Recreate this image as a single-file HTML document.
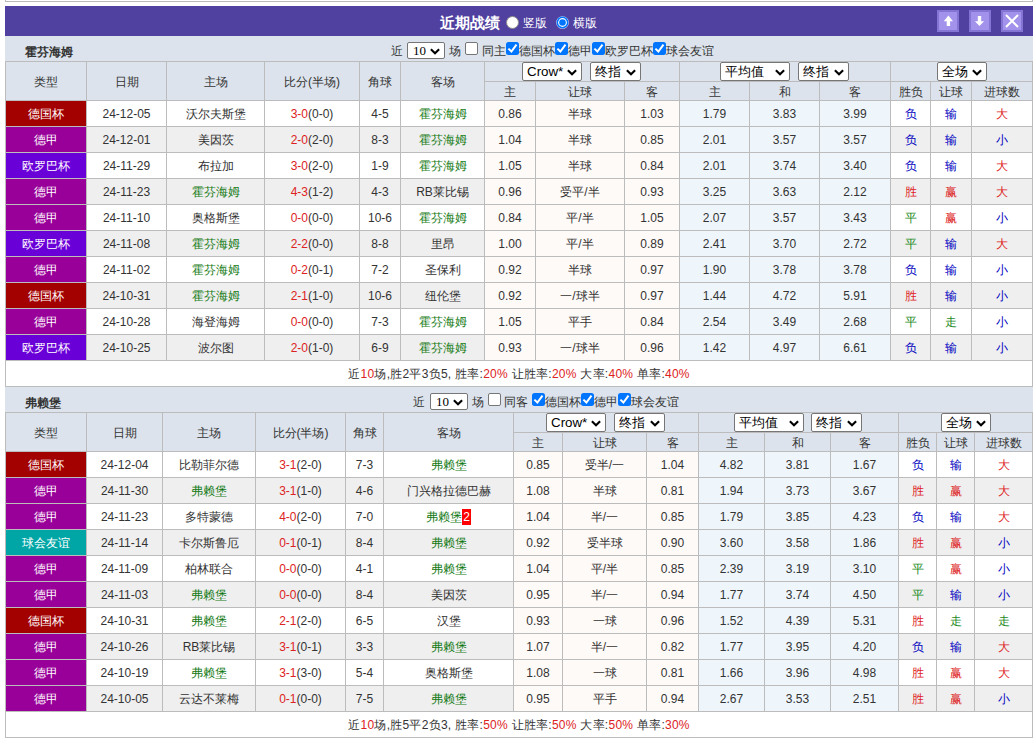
<!DOCTYPE html><html><head><meta charset="utf-8"><style>
*{box-sizing:border-box}
html,body{margin:0;padding:0;background:#fff}
body{width:1034px;height:740px;position:relative;overflow:hidden;font-family:"Liberation Sans",sans-serif;font-size:12px;color:#333}
.topbox{position:absolute;left:5px;top:-10px;width:1028px;height:12px;border:1px solid #b9b9b9;background:#fff}
.bar{position:absolute;left:5px;top:6px;width:1028px;height:30px;background:#5040a0}
.ttl{position:absolute;left:435px;top:9px;font-size:15px;font-weight:bold;color:#fff;line-height:16px}
.rad{position:absolute;top:10px;width:13px;height:13px;border-radius:50%;background:#fff;border:1px solid #8c8c8c}
.rad.on{border:none;background:none}
.rt{position:absolute;top:10px;color:#fff;font-size:12px;line-height:14px}
.btn{position:absolute;top:4px;width:22px;height:22px;background:#a392ec;border:2px solid #8474d4}
.sect{position:absolute;left:5px;width:1028px;height:25px;background:#dce3ec}
.sname{position:absolute;left:20px;top:9px;font-weight:bold;font-size:12px;line-height:14px;color:#333}
.ft{position:absolute;font-size:12px;line-height:20px;color:#333;white-space:nowrap}
.cb{position:absolute;width:13px;height:13px;border:1px solid #767676;border-radius:2px;background:#fff}
.cb.on{background:#0075ff;border:none;border-radius:2.5px}
.cb svg{position:absolute;left:0;top:0}
.sel{position:absolute;border:1px solid #767676;border-radius:2px;background:#fff;font-size:13.33px;color:#000;white-space:nowrap}
.sel .st{position:absolute;left:4px;top:0}
.sel.ser .st{font-family:"Liberation Serif",serif;font-size:13px;left:5px}
.sel .chev{position:absolute}
table.t{position:absolute;left:5px;border-collapse:separate;border-spacing:0;table-layout:fixed;width:1028px;border-left:1px solid #bcbcbc;border-top:1px solid #bcbcbc}
.t th,.t td{border-right:1px solid #bcbcbc;border-bottom:1px solid #bcbcbc;padding:0;text-align:center;font-weight:normal;white-space:nowrap;overflow:hidden;line-height:20px}
.t th{background:#dce3ec;color:#333}
.t tr.h1 th{height:20px;padding-top:2px}
.t tr.h1 th.sc{padding:0}
.t tr.h2 th{height:19px;padding-top:2px;line-height:16px}
.t tr.d td{height:26px;background:#fff;padding-top:0px}
.t tr.d.alt td{background:#efefef}
.t tr.d td.cw{background:#fefaf7}
.t tr.d td.av{background:#eff6fb}
.t td.ty{color:#fff}
.t tr.sum td{height:26px;background:#fff;letter-spacing:0.26px}
.red{color:#dd2222}
.gr{color:#137a13}
.r{color:#dd2222}
.b{color:#0000c0}
.g{color:#1a8a1a}
.red2{background:#f00;color:#fff;padding:1px 1px 1px 1px}
</style></head><body>
<div class="topbox"></div>
<div class="bar">
<div class="ttl">近期战绩</div>
<div class="rad" style="left:501px"></div><div class="rt" style="left:518px">竖版</div>
<div class="rad on" style="left:551px"><svg width="13" height="13" viewBox="0 0 13 13" style="position:absolute;left:0;top:0"><circle cx="6.5" cy="6.5" r="6.3" fill="#e6eeff"/><circle cx="6.5" cy="6.5" r="5.9" fill="#0075ff"/><circle cx="6.5" cy="6.5" r="4.4" fill="#fff"/><circle cx="6.5" cy="6.5" r="3.3" fill="#0075ff"/></svg></div><div class="rt" style="left:568px">横版</div>
<div class="btn" style="left:932px"><svg width="18" height="18" viewBox="0 0 18 18" style="position:absolute;left:0;top:0"><path d="M4.8 9.2 L9.4 3.6 L14 9.2 L11.1 9.2 L11.1 14.1 L7.7 14.1 L7.7 9.2 Z" fill="#fff"/></svg></div>
<div class="btn" style="left:964px"><svg width="18" height="18" viewBox="0 0 18 18" style="position:absolute;left:0;top:0"><path d="M3.9 9.2 L6.8 9.2 L6.8 3.9 L10.2 3.9 L10.2 9.2 L13.1 9.2 L8.5 14.1 Z" fill="#fff"/></svg></div>
<div class="btn" style="left:996px"><svg width="18" height="18" viewBox="0 0 18 18" style="position:absolute;left:0;top:0"><path d="M3 3 L15 15 M15 3 L3 15" stroke="#fff" stroke-width="2"/></svg></div>
</div>
<div class="sect" style="top:36px"><div class="sname">霍芬海姆</div></div>
<table class="t" style="top:61px">
<colgroup><col style="width:81px"><col style="width:80px"><col style="width:98px"><col style="width:95px"><col style="width:41px"><col style="width:84px"><col style="width:51px"><col style="width:89px"><col style="width:55px"><col style="width:70px"><col style="width:70px"><col style="width:71px"><col style="width:40px"><col style="width:41px"><col style="width:61px"></colgroup>
<tr class="h1">
<th rowspan="2">类型</th>
<th rowspan="2">日期</th>
<th rowspan="2">主场</th>
<th rowspan="2">比分(半场)</th>
<th rowspan="2">角球</th>
<th rowspan="2">客场</th>
<th colspan="3" class="sc"></th>
<th colspan="3" class="sc"></th>
<th colspan="3" class="sc"></th>
</tr>
<tr class="h2"><th>主</th><th>让球</th><th>客</th><th>主</th><th>和</th><th>客</th><th>胜负</th><th>让球</th><th>进球数</th></tr>
<tr class="d ">
<td class="ty" style="background:#a30000">德国杯</td>
<td>24-12-05</td>
<td>沃尔夫斯堡</td>
<td><span class="red">3-0</span>(0-0)</td>
<td>4-5</td>
<td><span class="gr">霍芬海姆</span></td>
<td class="cw">0.86</td>
<td class="cw">半球</td>
<td class="cw">1.03</td>
<td class="av">1.79</td>
<td class="av">3.83</td>
<td class="av">3.99</td>
<td class="b">负</td>
<td class="b">输</td>
<td class="r">大</td>
</tr>
<tr class="d alt">
<td class="ty" style="background:#990099">德甲</td>
<td>24-12-01</td>
<td>美因茨</td>
<td><span class="red">2-0</span>(2-0)</td>
<td>8-3</td>
<td><span class="gr">霍芬海姆</span></td>
<td class="cw">1.04</td>
<td class="cw">半球</td>
<td class="cw">0.85</td>
<td class="av">2.01</td>
<td class="av">3.57</td>
<td class="av">3.57</td>
<td class="b">负</td>
<td class="b">输</td>
<td class="b">小</td>
</tr>
<tr class="d ">
<td class="ty" style="background:#6a00d8">欧罗巴杯</td>
<td>24-11-29</td>
<td>布拉加</td>
<td><span class="red">3-0</span>(2-0)</td>
<td>1-9</td>
<td><span class="gr">霍芬海姆</span></td>
<td class="cw">1.05</td>
<td class="cw">半球</td>
<td class="cw">0.84</td>
<td class="av">2.01</td>
<td class="av">3.74</td>
<td class="av">3.40</td>
<td class="b">负</td>
<td class="b">输</td>
<td class="r">大</td>
</tr>
<tr class="d alt">
<td class="ty" style="background:#990099">德甲</td>
<td>24-11-23</td>
<td><span class="gr">霍芬海姆</span></td>
<td><span class="red">4-3</span>(1-2)</td>
<td>4-3</td>
<td>RB莱比锡</td>
<td class="cw">0.96</td>
<td class="cw">受平/半</td>
<td class="cw">0.93</td>
<td class="av">3.25</td>
<td class="av">3.63</td>
<td class="av">2.12</td>
<td class="r">胜</td>
<td class="r">赢</td>
<td class="r">大</td>
</tr>
<tr class="d ">
<td class="ty" style="background:#990099">德甲</td>
<td>24-11-10</td>
<td>奥格斯堡</td>
<td><span class="red">0-0</span>(0-0)</td>
<td>10-6</td>
<td><span class="gr">霍芬海姆</span></td>
<td class="cw">0.84</td>
<td class="cw">平/半</td>
<td class="cw">1.05</td>
<td class="av">2.07</td>
<td class="av">3.57</td>
<td class="av">3.43</td>
<td class="g">平</td>
<td class="r">赢</td>
<td class="b">小</td>
</tr>
<tr class="d alt">
<td class="ty" style="background:#6a00d8">欧罗巴杯</td>
<td>24-11-08</td>
<td><span class="gr">霍芬海姆</span></td>
<td><span class="red">2-2</span>(0-0)</td>
<td>8-8</td>
<td>里昂</td>
<td class="cw">1.00</td>
<td class="cw">平/半</td>
<td class="cw">0.89</td>
<td class="av">2.41</td>
<td class="av">3.70</td>
<td class="av">2.72</td>
<td class="g">平</td>
<td class="b">输</td>
<td class="r">大</td>
</tr>
<tr class="d ">
<td class="ty" style="background:#990099">德甲</td>
<td>24-11-02</td>
<td><span class="gr">霍芬海姆</span></td>
<td><span class="red">0-2</span>(0-1)</td>
<td>7-2</td>
<td>圣保利</td>
<td class="cw">0.92</td>
<td class="cw">半球</td>
<td class="cw">0.97</td>
<td class="av">1.90</td>
<td class="av">3.78</td>
<td class="av">3.78</td>
<td class="b">负</td>
<td class="b">输</td>
<td class="b">小</td>
</tr>
<tr class="d alt">
<td class="ty" style="background:#a30000">德国杯</td>
<td>24-10-31</td>
<td><span class="gr">霍芬海姆</span></td>
<td><span class="red">2-1</span>(1-0)</td>
<td>10-6</td>
<td>纽伦堡</td>
<td class="cw">0.92</td>
<td class="cw">一/球半</td>
<td class="cw">0.97</td>
<td class="av">1.44</td>
<td class="av">4.72</td>
<td class="av">5.91</td>
<td class="r">胜</td>
<td class="b">输</td>
<td class="b">小</td>
</tr>
<tr class="d ">
<td class="ty" style="background:#990099">德甲</td>
<td>24-10-28</td>
<td>海登海姆</td>
<td><span class="red">0-0</span>(0-0)</td>
<td>7-3</td>
<td><span class="gr">霍芬海姆</span></td>
<td class="cw">1.05</td>
<td class="cw">平手</td>
<td class="cw">0.84</td>
<td class="av">2.54</td>
<td class="av">3.49</td>
<td class="av">2.68</td>
<td class="g">平</td>
<td class="g">走</td>
<td class="b">小</td>
</tr>
<tr class="d alt">
<td class="ty" style="background:#6a00d8">欧罗巴杯</td>
<td>24-10-25</td>
<td>波尔图</td>
<td><span class="red">2-0</span>(1-0)</td>
<td>6-9</td>
<td><span class="gr">霍芬海姆</span></td>
<td class="cw">0.93</td>
<td class="cw">一/球半</td>
<td class="cw">0.96</td>
<td class="av">1.42</td>
<td class="av">4.97</td>
<td class="av">6.61</td>
<td class="b">负</td>
<td class="b">输</td>
<td class="b">小</td>
</tr>
<tr class="sum"><td colspan="15">近<span class="red">10</span>场,胜2平3负5, 胜率:<span class="red">20%</span> 让胜率:<span class="red">20%</span> 大率:<span class="red">40%</span> 单率:<span class="red">40%</span></td></tr>
</table>
<div class="sect" style="top:387px"><div class="sname">弗赖堡</div></div>
<table class="t" style="top:412px">
<colgroup><col style="width:81px"><col style="width:76px"><col style="width:93px"><col style="width:90px"><col style="width:38px"><col style="width:130px"><col style="width:49px"><col style="width:84px"><col style="width:52px"><col style="width:66px"><col style="width:66px"><col style="width:68px"><col style="width:38px"><col style="width:38px"><col style="width:58px"></colgroup>
<tr class="h1">
<th rowspan="2">类型</th>
<th rowspan="2">日期</th>
<th rowspan="2">主场</th>
<th rowspan="2">比分(半场)</th>
<th rowspan="2">角球</th>
<th rowspan="2">客场</th>
<th colspan="3" class="sc"></th>
<th colspan="3" class="sc"></th>
<th colspan="3" class="sc"></th>
</tr>
<tr class="h2"><th>主</th><th>让球</th><th>客</th><th>主</th><th>和</th><th>客</th><th>胜负</th><th>让球</th><th>进球数</th></tr>
<tr class="d ">
<td class="ty" style="background:#a30000">德国杯</td>
<td>24-12-04</td>
<td>比勒菲尔德</td>
<td><span class="red">3-1</span>(2-0)</td>
<td>7-3</td>
<td><span class="gr">弗赖堡</span></td>
<td class="cw">0.85</td>
<td class="cw">受半/一</td>
<td class="cw">1.04</td>
<td class="av">4.82</td>
<td class="av">3.81</td>
<td class="av">1.67</td>
<td class="b">负</td>
<td class="b">输</td>
<td class="r">大</td>
</tr>
<tr class="d alt">
<td class="ty" style="background:#990099">德甲</td>
<td>24-11-30</td>
<td><span class="gr">弗赖堡</span></td>
<td><span class="red">3-1</span>(1-0)</td>
<td>4-6</td>
<td>门兴格拉德巴赫</td>
<td class="cw">1.08</td>
<td class="cw">半球</td>
<td class="cw">0.81</td>
<td class="av">1.94</td>
<td class="av">3.73</td>
<td class="av">3.67</td>
<td class="r">胜</td>
<td class="r">赢</td>
<td class="r">大</td>
</tr>
<tr class="d ">
<td class="ty" style="background:#990099">德甲</td>
<td>24-11-23</td>
<td>多特蒙德</td>
<td><span class="red">4-0</span>(2-0)</td>
<td>7-0</td>
<td><span class="gr">弗赖堡</span><span class="red2">2</span></td>
<td class="cw">1.04</td>
<td class="cw">半/一</td>
<td class="cw">0.85</td>
<td class="av">1.79</td>
<td class="av">3.85</td>
<td class="av">4.23</td>
<td class="b">负</td>
<td class="b">输</td>
<td class="r">大</td>
</tr>
<tr class="d alt">
<td class="ty" style="background:#00a6a6">球会友谊</td>
<td>24-11-14</td>
<td>卡尔斯鲁厄</td>
<td><span class="red">0-1</span>(0-1)</td>
<td>8-4</td>
<td><span class="gr">弗赖堡</span></td>
<td class="cw">0.92</td>
<td class="cw">受半球</td>
<td class="cw">0.90</td>
<td class="av">3.60</td>
<td class="av">3.58</td>
<td class="av">1.86</td>
<td class="r">胜</td>
<td class="r">赢</td>
<td class="b">小</td>
</tr>
<tr class="d ">
<td class="ty" style="background:#990099">德甲</td>
<td>24-11-09</td>
<td>柏林联合</td>
<td><span class="red">0-0</span>(0-0)</td>
<td>4-1</td>
<td><span class="gr">弗赖堡</span></td>
<td class="cw">1.04</td>
<td class="cw">平/半</td>
<td class="cw">0.85</td>
<td class="av">2.39</td>
<td class="av">3.19</td>
<td class="av">3.10</td>
<td class="g">平</td>
<td class="r">赢</td>
<td class="b">小</td>
</tr>
<tr class="d alt">
<td class="ty" style="background:#990099">德甲</td>
<td>24-11-03</td>
<td><span class="gr">弗赖堡</span></td>
<td><span class="red">0-0</span>(0-0)</td>
<td>8-4</td>
<td>美因茨</td>
<td class="cw">0.95</td>
<td class="cw">半/一</td>
<td class="cw">0.94</td>
<td class="av">1.77</td>
<td class="av">3.74</td>
<td class="av">4.50</td>
<td class="g">平</td>
<td class="b">输</td>
<td class="b">小</td>
</tr>
<tr class="d ">
<td class="ty" style="background:#a30000">德国杯</td>
<td>24-10-31</td>
<td><span class="gr">弗赖堡</span></td>
<td><span class="red">2-1</span>(2-0)</td>
<td>6-5</td>
<td>汉堡</td>
<td class="cw">0.93</td>
<td class="cw">一球</td>
<td class="cw">0.96</td>
<td class="av">1.52</td>
<td class="av">4.39</td>
<td class="av">5.31</td>
<td class="r">胜</td>
<td class="g">走</td>
<td class="g">走</td>
</tr>
<tr class="d alt">
<td class="ty" style="background:#990099">德甲</td>
<td>24-10-26</td>
<td>RB莱比锡</td>
<td><span class="red">3-1</span>(0-1)</td>
<td>3-3</td>
<td><span class="gr">弗赖堡</span></td>
<td class="cw">1.07</td>
<td class="cw">半/一</td>
<td class="cw">0.82</td>
<td class="av">1.77</td>
<td class="av">3.95</td>
<td class="av">4.20</td>
<td class="b">负</td>
<td class="b">输</td>
<td class="r">大</td>
</tr>
<tr class="d ">
<td class="ty" style="background:#990099">德甲</td>
<td>24-10-19</td>
<td><span class="gr">弗赖堡</span></td>
<td><span class="red">3-1</span>(3-0)</td>
<td>5-4</td>
<td>奥格斯堡</td>
<td class="cw">1.08</td>
<td class="cw">一球</td>
<td class="cw">0.81</td>
<td class="av">1.66</td>
<td class="av">3.96</td>
<td class="av">4.98</td>
<td class="r">胜</td>
<td class="r">赢</td>
<td class="r">大</td>
</tr>
<tr class="d alt">
<td class="ty" style="background:#990099">德甲</td>
<td>24-10-05</td>
<td>云达不莱梅</td>
<td><span class="red">0-1</span>(0-0)</td>
<td>7-5</td>
<td><span class="gr">弗赖堡</span></td>
<td class="cw">0.95</td>
<td class="cw">平手</td>
<td class="cw">0.94</td>
<td class="av">2.67</td>
<td class="av">3.53</td>
<td class="av">2.51</td>
<td class="r">胜</td>
<td class="r">赢</td>
<td class="b">小</td>
</tr>
<tr class="sum"><td colspan="15">近<span class="red">10</span>场,胜5平2负3, 胜率:<span class="red">50%</span> 让胜率:<span class="red">50%</span> 大率:<span class="red">50%</span> 单率:<span class="red">30%</span></td></tr>
</table>
<div class="ft" style="left:391px;top:41px">近</div>
<div class="sel ser" style="left:407px;top:42px;width:38px;height:17px"><span class="st" style="line-height:15px">10</span><svg class="chev" style="right:4px;top:5px" width="10" height="7" viewBox="0 0 10 7"><path d="M0.9 1.2 L5 5.3 L9.1 1.2" fill="none" stroke="#000" stroke-width="2.1"/></svg></div>
<div class="ft" style="left:449px;top:41px">场</div>
<div class="cb" style="left:465px;top:42px"></div>
<div class="ft" style="left:482px;top:41px">同主</div>
<div class="cb on" style="left:506px;top:42px"><svg width="13" height="13" viewBox="0 0 13 13"><path d="M2.4 6.6 L5.4 9.5 L10.5 2.6" fill="none" stroke="#fff" stroke-width="2"/></svg></div>
<div class="ft" style="left:519px;top:41px">德国杯</div>
<div class="cb on" style="left:555px;top:42px"><svg width="13" height="13" viewBox="0 0 13 13"><path d="M2.4 6.6 L5.4 9.5 L10.5 2.6" fill="none" stroke="#fff" stroke-width="2"/></svg></div>
<div class="ft" style="left:568px;top:41px">德甲</div>
<div class="cb on" style="left:592px;top:42px"><svg width="13" height="13" viewBox="0 0 13 13"><path d="M2.4 6.6 L5.4 9.5 L10.5 2.6" fill="none" stroke="#fff" stroke-width="2"/></svg></div>
<div class="ft" style="left:605px;top:41px">欧罗巴杯</div>
<div class="cb on" style="left:653px;top:42px"><svg width="13" height="13" viewBox="0 0 13 13"><path d="M2.4 6.6 L5.4 9.5 L10.5 2.6" fill="none" stroke="#fff" stroke-width="2"/></svg></div>
<div class="ft" style="left:666px;top:41px">球会友谊</div>
<div class="sel " style="left:522px;top:62px;width:60px;height:19px"><span class="st" style="line-height:17px">Crow*</span><svg class="chev" style="right:4px;top:6px" width="10" height="7" viewBox="0 0 10 7"><path d="M0.9 1.2 L5 5.3 L9.1 1.2" fill="none" stroke="#000" stroke-width="2.1"/></svg></div>
<div class="sel " style="left:590px;top:62px;width:51px;height:19px"><span class="st" style="line-height:17px">终指</span><svg class="chev" style="right:4px;top:6px" width="10" height="7" viewBox="0 0 10 7"><path d="M0.9 1.2 L5 5.3 L9.1 1.2" fill="none" stroke="#000" stroke-width="2.1"/></svg></div>
<div class="sel " style="left:720px;top:62px;width:70px;height:19px"><span class="st" style="line-height:17px">平均值</span><svg class="chev" style="right:4px;top:6px" width="10" height="7" viewBox="0 0 10 7"><path d="M0.9 1.2 L5 5.3 L9.1 1.2" fill="none" stroke="#000" stroke-width="2.1"/></svg></div>
<div class="sel " style="left:798px;top:62px;width:51px;height:19px"><span class="st" style="line-height:17px">终指</span><svg class="chev" style="right:4px;top:6px" width="10" height="7" viewBox="0 0 10 7"><path d="M0.9 1.2 L5 5.3 L9.1 1.2" fill="none" stroke="#000" stroke-width="2.1"/></svg></div>
<div class="sel " style="left:937px;top:62px;width:50px;height:19px"><span class="st" style="line-height:17px">全场</span><svg class="chev" style="right:4px;top:6px" width="10" height="7" viewBox="0 0 10 7"><path d="M0.9 1.2 L5 5.3 L9.1 1.2" fill="none" stroke="#000" stroke-width="2.1"/></svg></div>
<div class="ft" style="left:413px;top:392px">近</div>
<div class="sel ser" style="left:430px;top:393px;width:38px;height:17px"><span class="st" style="line-height:15px">10</span><svg class="chev" style="right:4px;top:5px" width="10" height="7" viewBox="0 0 10 7"><path d="M0.9 1.2 L5 5.3 L9.1 1.2" fill="none" stroke="#000" stroke-width="2.1"/></svg></div>
<div class="ft" style="left:472px;top:392px">场</div>
<div class="cb" style="left:488px;top:393px"></div>
<div class="ft" style="left:504px;top:392px">同客</div>
<div class="cb on" style="left:532px;top:393px"><svg width="13" height="13" viewBox="0 0 13 13"><path d="M2.4 6.6 L5.4 9.5 L10.5 2.6" fill="none" stroke="#fff" stroke-width="2"/></svg></div>
<div class="ft" style="left:545px;top:392px">德国杯</div>
<div class="cb on" style="left:581px;top:393px"><svg width="13" height="13" viewBox="0 0 13 13"><path d="M2.4 6.6 L5.4 9.5 L10.5 2.6" fill="none" stroke="#fff" stroke-width="2"/></svg></div>
<div class="ft" style="left:594px;top:392px">德甲</div>
<div class="cb on" style="left:618px;top:393px"><svg width="13" height="13" viewBox="0 0 13 13"><path d="M2.4 6.6 L5.4 9.5 L10.5 2.6" fill="none" stroke="#fff" stroke-width="2"/></svg></div>
<div class="ft" style="left:631px;top:392px">球会友谊</div>
<div class="sel " style="left:546px;top:413px;width:60px;height:19px"><span class="st" style="line-height:17px">Crow*</span><svg class="chev" style="right:4px;top:6px" width="10" height="7" viewBox="0 0 10 7"><path d="M0.9 1.2 L5 5.3 L9.1 1.2" fill="none" stroke="#000" stroke-width="2.1"/></svg></div>
<div class="sel " style="left:614px;top:413px;width:51px;height:19px"><span class="st" style="line-height:17px">终指</span><svg class="chev" style="right:4px;top:6px" width="10" height="7" viewBox="0 0 10 7"><path d="M0.9 1.2 L5 5.3 L9.1 1.2" fill="none" stroke="#000" stroke-width="2.1"/></svg></div>
<div class="sel " style="left:734px;top:413px;width:70px;height:19px"><span class="st" style="line-height:17px">平均值</span><svg class="chev" style="right:4px;top:6px" width="10" height="7" viewBox="0 0 10 7"><path d="M0.9 1.2 L5 5.3 L9.1 1.2" fill="none" stroke="#000" stroke-width="2.1"/></svg></div>
<div class="sel " style="left:811px;top:413px;width:51px;height:19px"><span class="st" style="line-height:17px">终指</span><svg class="chev" style="right:4px;top:6px" width="10" height="7" viewBox="0 0 10 7"><path d="M0.9 1.2 L5 5.3 L9.1 1.2" fill="none" stroke="#000" stroke-width="2.1"/></svg></div>
<div class="sel " style="left:941px;top:413px;width:50px;height:19px"><span class="st" style="line-height:17px">全场</span><svg class="chev" style="right:4px;top:6px" width="10" height="7" viewBox="0 0 10 7"><path d="M0.9 1.2 L5 5.3 L9.1 1.2" fill="none" stroke="#000" stroke-width="2.1"/></svg></div>
</body></html>
